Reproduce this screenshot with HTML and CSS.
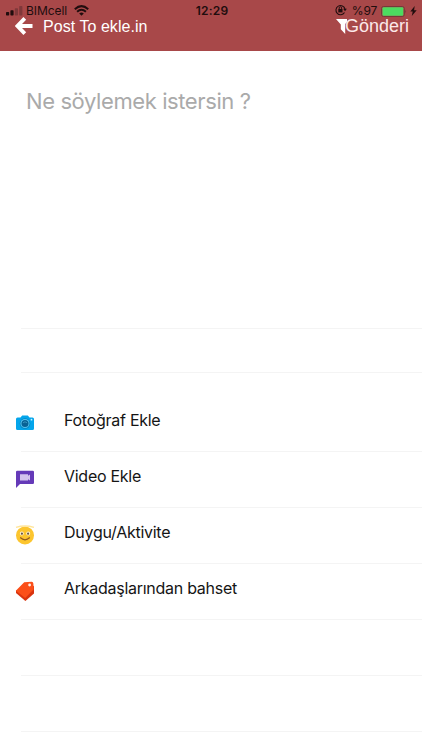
FILE: index.html
```html
<!DOCTYPE html>
<html lang="tr">
<head>
<meta charset="utf-8">
<meta name="viewport" content="width=device-width, initial-scale=1">
<title>Post To ekle.in</title>
<link rel="stylesheet" href="styles.css">
</head>
<body>
<header class="header">
  <div class="status">
    <div class="status-left">
      <svg class="signal" width="17" height="10" viewBox="0 0 17 10"><g fill="#210d0e"><rect x="0" y="6" width="3.2" height="3.5" rx=".7"/><rect x="4.4" y="4.3" width="3.2" height="5.2" rx=".7"/></g><g fill="#7f383a"><rect x="8.8" y="2.2" width="3.2" height="7.3" rx=".7"/><rect x="13.2" y="0" width="3.2" height="9.5" rx=".7"/></g></svg>
      <span class="carrier">BIMcell</span>
      <svg class="wifi" width="15" height="11" viewBox="0 0 15 11" fill="none" stroke="#210d0e" stroke-width="2"><path d="M.8 4.2Q7.5-2 14.2 4.2M3.1 6.7q4.4-4 8.8 0"/><path d="M7.5 10.7 5.2 8.5q2.3-1.8 4.6 0z" fill="#210d0e" stroke="none"/></svg>
    </div>
    <time class="clock">12:29</time>
    <div class="status-right">
      <svg class="lock" width="12" height="12" viewBox="0 0 12 12" fill="none" stroke="#210d0e"><path d="M9.5 8.5A4.6 4.6 0 1 1 10 5" stroke-width="1.1"/><path d="M8.1 4.8h3.8L10 7.2z" fill="#210d0e" stroke="none"/><rect x="3.3" y="5" width="4.2" height="3.4" fill="#210d0e" stroke="none"/><path d="M4.2 5V3.9a1.2 1.2 0 0 1 2.4 0V5" stroke-width=".9"/></svg>
      <span class="percent">%97</span>
      <svg width="26" height="11" viewBox="0 0 26 11"><rect x=".5" y=".5" width="22.8" height="10" rx="2" fill="none" stroke="#74393a"/><rect x="1.5" y="1.3" width="20.8" height="8.4" rx="1" fill="#4cdb60"/><path d="M24.3 3.8q1.7 1.7 0 3.4z" fill="#74393a"/></svg>
      <svg class="bolt" width="7" height="10" viewBox="0 0 7 10"><path d="M4.7 0 .3 5.6h2.4L1.8 10 6.7 4.2H4.1z" fill="#210d0e"/></svg>
    </div>
  </div>
  <div class="nav">
    <svg class="back" width="18" height="18" viewBox="0 0 18 18" fill="none" stroke="#fff" stroke-width="3.8"><path d="M9.8 1.4 2.5 9l7.3 7.6M2.5 9h15"/></svg>
    <h1 class="title">Post To ekle.in</h1>
    <button class="send" type="button"><svg width="12" height="15" viewBox="0 0 12 15"><path d="M0 0h11v3L9.2 5v10L4.8 10.2V5.6z" fill="#fff"/></svg><span>Gönderi</span></button>
  </div>
</header>
<main>
  <section class="composer"><p class="prompt">Ne söylemek istersin ?</p></section>
  <div class="spacer"></div>
  <ul class="actions">
    <li class="action"><svg class="icon" width="20" height="20" viewBox="0 0 20 20"><path d="M2.5 4.5h3l1.7-2h5.6l1.7 2h3Q19 4.5 19 6v9.5q0 1.5-1.5 1.5h-15Q1 17 1 15.5V6q0-1.5 1.5-1.5z" fill="#04a5eb"/><circle cx="10" cy="10.5" r="5.3" fill="#0583bd"/><circle cx="10" cy="10.5" r="4.5" fill="#53c4f1"/><circle cx="10" cy="10.5" r="3.5" fill="#086295"/><path d="M8 9.8q2-2.1 4 0" fill="none" stroke="#4ca7cd" stroke-width=".7"/><circle cx="16.5" cy="6.7" r=".9" fill="#c9f1ff"/></svg><span>Fotoğraf Ekle</span></li>
    <li class="action"><svg class="icon" width="20" height="20" viewBox="0 0 20 20"><path d="M2.2 1.7h15.6q1.2 0 1.2 1.2v10.8q0 1.2-1.2 1.2H5L1 19V2.9q0-1.2 1.2-1.2z" fill="#653ab8"/><path d="M5 5.2h8v1.6l2-1.2v5.8l-2-1.2v1.4H5z" fill="#d4c3ed"/></svg><span>Video Ekle</span></li>
    <li class="action"><svg class="icon" width="20" height="20" viewBox="0 0 20 20"><circle cx="10" cy="10.4" r="9" fill="#fcc52e"/><path d="M1 2.4Q10-.4 19 2.4" fill="none" stroke="#ffe59a" stroke-width="1.4"/><ellipse cx="6.8" cy="8.4" rx="1.9" ry="2" fill="#fff5dc"/><ellipse cx="13.2" cy="8.4" rx="1.9" ry="2" fill="#fff5dc"/><circle cx="6.9" cy="8.7" r="1.1" fill="#6a5540"/><circle cx="13.1" cy="8.7" r="1.1" fill="#6a5540"/><path d="M5.2 12.5q4.8 4.6 9.6 0" fill="none" stroke="#93591e" stroke-width="1.1"/></svg><span>Duygu/Aktivite</span></li>
    <li class="action"><svg class="icon" width="20" height="20" viewBox="0 0 20 20"><path d="M1 9.5V12l9.4 8 8.6-7.5V5z" fill="#d9340f"/><path d="M9.2 1.2 16.7.8q1.5 0 1.6 1.5l.5 6-8.6 8.8L.8 9.8z" fill="#fb4f19"/><circle cx="14.6" cy="4" r="1.4" fill="#fff0e9"/></svg><span>Arkadaşlarından bahset</span></li>
    <li class="action"></li>
    <li class="action"></li>
  </ul>
</main>
</body>
</html>
```
FILE: styles.css
```css
* { box-sizing: border-box; }
body { margin: 0; height: 750px; overflow: hidden; background: #fff; color: #151515; font-family: Inter, "Noto Sans", sans-serif; }
.header { height: 51px; padding-top: 3px; background: #a84849; }
.status { display: grid; grid-template-columns: 1fr auto 1fr; align-items: center; height: 16px; padding: 0 5px 0 6px; color: #210d0e; font-size: 12px; line-height: 16px; }
.status-left, .status-right { display: flex; align-items: center; }
.signal { margin-right: 3px; }
.carrier { width: 42px; margin-right: 6px; letter-spacing: -.05px; }
.wifi { margin-bottom: 2px; }
.clock { margin-left: 1px; font-weight: 600; letter-spacing: .2px; }
.status-right { justify-content: flex-end; }
.lock { margin-bottom: 2px; }
.percent { margin: 0 4px 0 5px; letter-spacing: -.2px; }
.bolt { margin-left: 3px; }
.nav { display: flex; align-items: center; height: 14px; padding: 0 13px 0 15px; font-family: "Liberation Sans", sans-serif; color: #fff; }
.nav svg { flex: none; }
.title { margin: 1px 0 0 10px; font-size: 16px; font-weight: 400; line-height: 14px; letter-spacing: .05px; white-space: nowrap; }
.send { display: flex; align-items: center; margin-left: auto; padding: 0; border: 0; background: none; color: #fce9e9; font: 18px/14px "Liberation Sans", sans-serif; }
.send span { margin-left: -3px; }
.composer { height: 278px; margin-left: 21px; padding: 35px 0 0 5px; border-bottom: 1px solid #f4f4f4; }
.prompt { margin: 0; color: #aaa; font-size: 22px; line-height: 30px; letter-spacing: -.4px; }
.spacer { height: 44px; margin-left: 21px; border-bottom: 1px solid #f4f4f4; }
.actions { margin: 0; padding: 23px 0 0; list-style: none; }
.action { position: relative; display: flex; align-items: center; height: 56px; padding: 0 0 9px 15px; font-size: 16px; line-height: 20px; letter-spacing: -.27px; }
.action::after { content: ""; position: absolute; right: 0; bottom: 0; left: 21px; height: 1px; background: #f4f4f4; }
.icon { flex: none; margin: 6px 29px 0 0; }
```
